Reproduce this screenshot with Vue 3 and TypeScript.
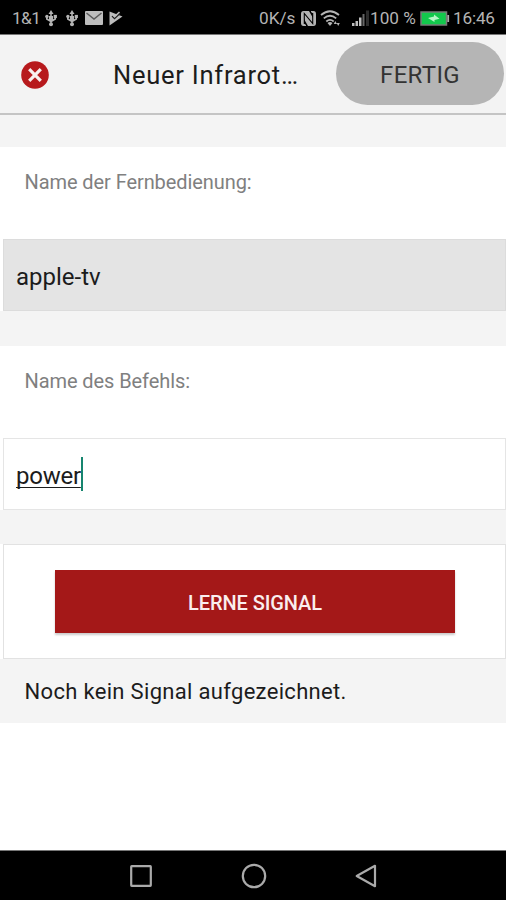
<script setup lang="ts">
import { ref } from 'vue'

const remoteName = ref('apple-tv')
const commandName = ref('power')
</script>

<template>
  <div class="screen">
    <div class="status">
      <span class="carrier">1&amp;1</span>
      <svg v-for="n in 2" :key="n" class="usb" width="12" height="17" viewBox="0 0 12 17">
        <path d="M6 2V15M1.8 6V9L6 11.5L10.2 9V6" fill="none" stroke="#b4b4b4" stroke-width="1.6" />
        <path d="M6 0L8.5 4H3.5Z" fill="#b4b4b4" />
        <circle cx="6" cy="14.3" r="2" fill="#b4b4b4" />
        <circle cx="1.9" cy="6.5" r="1.7" fill="#b4b4b4" />
        <rect x="8.7" y="4.9" width="3.2" height="3.2" fill="#b4b4b4" />
        <path d="M4 6H8V10H4Z" fill="#b4b4b4" />
      </svg>
      <svg class="mail" width="18" height="14" viewBox="0 0 18 14">
        <rect width="18" height="14" rx="1" fill="#bdbdbd" />
        <path d="M1.5 2L9 8L16.5 2" fill="none" stroke="#5a5a5a" stroke-width="1.5" />
      </svg>
      <svg class="play" width="14" height="15" viewBox="0 0 14 15">
        <path d="M0.5 0.5L13.5 5.5L0.5 14.5Z" fill="#bdbdbd" />
        <path d="M3 5L5.5 7.5L11 2.4" fill="none" stroke="#222" stroke-width="1.3" />
        <path d="M3 3L5.6 5.6L10.5 1" fill="none" stroke="#bdbdbd" stroke-width="1.5" />
      </svg>
      <span class="speed">0K/s</span>
      <svg class="nfc" width="17" height="17" viewBox="0 0 17 17">
        <path d="M3.5 1H9L13 8V3.5L11 2V1H13.5Q16 1 16 4V13Q16 16 13.5 16H8L4 9V13.5L6 15V16H3.5Q1 16 1 13V4Q1 1 3.5 1Z" fill="#b4b4b4" />
        <path d="M4.3 14V3.5L12.7 13.5V3" fill="none" stroke="#000" stroke-width="1.1" />
      </svg>
      <svg class="wifi" width="21" height="17" viewBox="0 0 21 17">
        <g fill="none" stroke="#b4b4b4" stroke-width="1.8">
          <path d="M1 5Q10 -2.5 19 5" />
          <path d="M3.8 8.4Q10 3 16.2 8.4" />
          <path d="M6.3 11.5Q10 8.2 13.7 11.5" />
        </g>
        <path d="M7.5 13Q10 11.2 12.5 13L10 16Z" fill="#b4b4b4" />
        <path d="M15.3 11L17 14H13.8ZM18.2 16L16.7 13H19.8Z" fill="#b4b4b4" />
      </svg>
      <svg class="cell" width="18" height="17" viewBox="0 0 18 17">
        <path d="M0 13H2.5V16H0ZM3.5 11H6V16H3.5ZM7 7.5H9.5V16H7Z" fill="#bdbdbd" />
        <path d="M10.5 4H12.5V16H10.5Z" fill="#666" />
        <path d="M14 0.5H17V16H14Z" fill="#2c2c2c" />
      </svg>
      <span class="percent">100 %</span>
      <svg class="battery" width="30" height="15" viewBox="0 0 30 15">
        <rect x="1" y="1" width="25.5" height="13" fill="#12c84c" stroke="#777b78" stroke-width="1.5" />
        <rect x="27.3" y="4" width="1.8" height="7" fill="#aaa" />
        <path d="M8 7L14 5.4V3.5L19.5 7.8L14.5 9V11Z" fill="#b4f7c6" />
      </svg>
      <span class="clock">16:46</span>
    </div>

    <header class="bar">
      <button class="close" aria-label="Abbrechen">
        <svg width="28" height="28" viewBox="0 0 28 28">
          <circle cx="14" cy="14" r="13.8" fill="#b71a1d" />
          <path d="M8.2 8.2L19.8 19.8M19.8 8.2L8.2 19.8" stroke="#f8eeee" stroke-width="3.2" />
        </svg>
      </button>
      <h1 class="title">Neuer Infrarot…</h1>
      <button class="done">FERTIG</button>
    </header>

    <main class="content">
      <p class="label first">Name der Fernbedienung:</p>
      <div class="slot"><div class="field filled"><span class="value remote">{{ remoteName }}</span></div></div>
      <p class="label second">Name des Befehls:</p>
      <div class="slot"><div class="field editing"><span class="value command">{{ commandName }}</span><i class="caret"></i></div></div>
      <div class="slot action">
        <section class="panel">
          <button class="learn"><span>LERNE SIGNAL</span></button>
        </section>
      </div>
      <p class="message">Noch kein Signal aufgezeichnet.</p>
    </main>

    <nav class="nav">
      <svg width="22" height="22" viewBox="0 0 22 22"><rect x="1.2" y="1.2" width="19.6" height="19.6" rx="0.5" /></svg>
      <svg width="26" height="26" viewBox="0 0 26 26"><circle cx="13" cy="13" r="11.2" /></svg>
      <svg width="22" height="24" viewBox="0 0 22 24"><path d="M20 1.8V22.2L1.7 12Z" /></svg>
    </nav>
  </div>
</template>

<style>
body {
  margin: 0;
}
</style>

<style scoped>
.screen {
  width: 506px;
  height: 900px;
  display: flex;
  flex-direction: column;
  overflow: hidden;
  background: #fff;
  color: #1c1c1c;
  font-family: Roboto, "Liberation Sans", sans-serif;
}
button {
  border: 0;
  padding: 0;
  font-family: inherit;
}
p,
h1 {
  margin: 0;
  font-weight: 400;
}
.status {
  box-sizing: border-box;
  flex: 0 0 34px;
  display: flex;
  align-items: center;
  padding: 2px 0 0 12px;
  background: #000;
  border-bottom: 1px solid #777;
  color: #b4b4b4;
  font-size: 17.2px;
  line-height: 32px;
  white-space: nowrap;
}
.status svg {
  flex: none;
}
.carrier {
  flex: none;
  width: 33px;
  letter-spacing: -0.6px;
}
.usb {
  margin-right: 9px;
}
.mail {
  margin-left: -2px;
}
.play {
  margin-left: 6px;
}
.speed {
  flex: none;
  width: 41px;
  margin-left: 136px;
}
.wifi {
  margin-left: 3px;
}
.cell {
  margin-left: 11px;
}
.percent {
  flex: none;
  width: 46px;
}
.battery {
  margin-left: 4px;
}
.clock {
  margin-left: 3px;
  letter-spacing: -0.2px;
}
.bar {
  box-sizing: border-box;
  flex: 0 0 80px;
  display: flex;
  align-items: center;
  padding: 0 2px 0 21px;
  background: #f3f3f3;
  border-bottom: 2px solid #c4c4c4;
}
.close {
  width: 28px;
  height: 28px;
  margin-top: 2px;
  background: none;
}
.close svg {
  display: block;
}
.title {
  width: 223px;
  margin-left: 64px;
  margin-top: 1px;
  font-size: 25.5px;
  line-height: 30px;
  letter-spacing: 0.75px;
  white-space: nowrap;
}
.done {
  flex: none;
  width: 168px;
  height: 63px;
  margin-top: -2px;
  padding-top: 3px;
  border-radius: 32px;
  background: #b5b5b5;
  color: #333;
  font-size: 24px;
  letter-spacing: 0.3px;
}
.content {
  flex: 0 0 609px;
  display: flex;
  flex-direction: column;
  background: #f4f4f4;
}
.label {
  box-sizing: border-box;
  height: 92px;
  padding: 23px 24.5px 0;
  background: #fff;
  color: #808080;
  font-size: 20px;
  line-height: 24px;
  letter-spacing: -0.08px;
}
.first {
  margin-top: 33px;
}
.second {
  margin-top: 35px;
}
.slot {
  padding-left: 3px;
  background: #fff;
}
.action {
  margin-top: 34px;
}
.field {
  box-sizing: border-box;
  height: 72px;
  padding-left: 12px;
  display: flex;
  align-items: center;
  border: 1px solid #dcdcdc;
  font-size: 24px;
}
.filled {
  background: #e4e4e4;
}
.editing {
  background: #fff;
  border: 1px solid #e5e5e5;
}
.value {
  padding-top: 3px;
  line-height: 28px;
}
.command {
  letter-spacing: -0.25px;
  text-decoration: underline;
  text-decoration-thickness: 1px;
  text-decoration-skip-ink: none;
  text-underline-offset: 3px;
}
.caret {
  width: 2px;
  height: 34px;
  margin-top: -1px;
  background: #16856f;
}
.panel {
  box-sizing: border-box;
  height: 115px;
  padding: 25px 50px 0 51px;
  border: 1px solid #e2e2e2;
  background: #fff;
}
.learn {
  width: 400px;
  height: 63px;
  display: block;
  padding-top: 2px;
  background: #a41818;
  box-shadow: 0 2px 2px #ccc;
  color: #faeeee;
  font-size: 20px;
  font-weight: 500;
  letter-spacing: -0.1px;
}
.message {
  padding: 19px 24.5px 0;
  font-size: 22px;
  line-height: 28px;
  letter-spacing: 0.32px;
}
.content .first {
  margin-top: 32px;
}
.content {
  flex-basis: 608px;
  margin-top: 1px;
}
.bar {
  flex-basis: 80px;
  margin-bottom: -1px;
}
.nav {
  box-sizing: border-box;
  flex: 0 0 50px;
  margin-top: auto;
  display: flex;
  align-items: center;
  justify-content: space-between;
  padding: 0 129px 0 130px;
  border-top: 1px solid #777;
  background: #000;
}
.nav svg {
  fill: none;
  stroke: #aaa;
  stroke-width: 2.2;
  stroke-linejoin: round;
}
</style>
